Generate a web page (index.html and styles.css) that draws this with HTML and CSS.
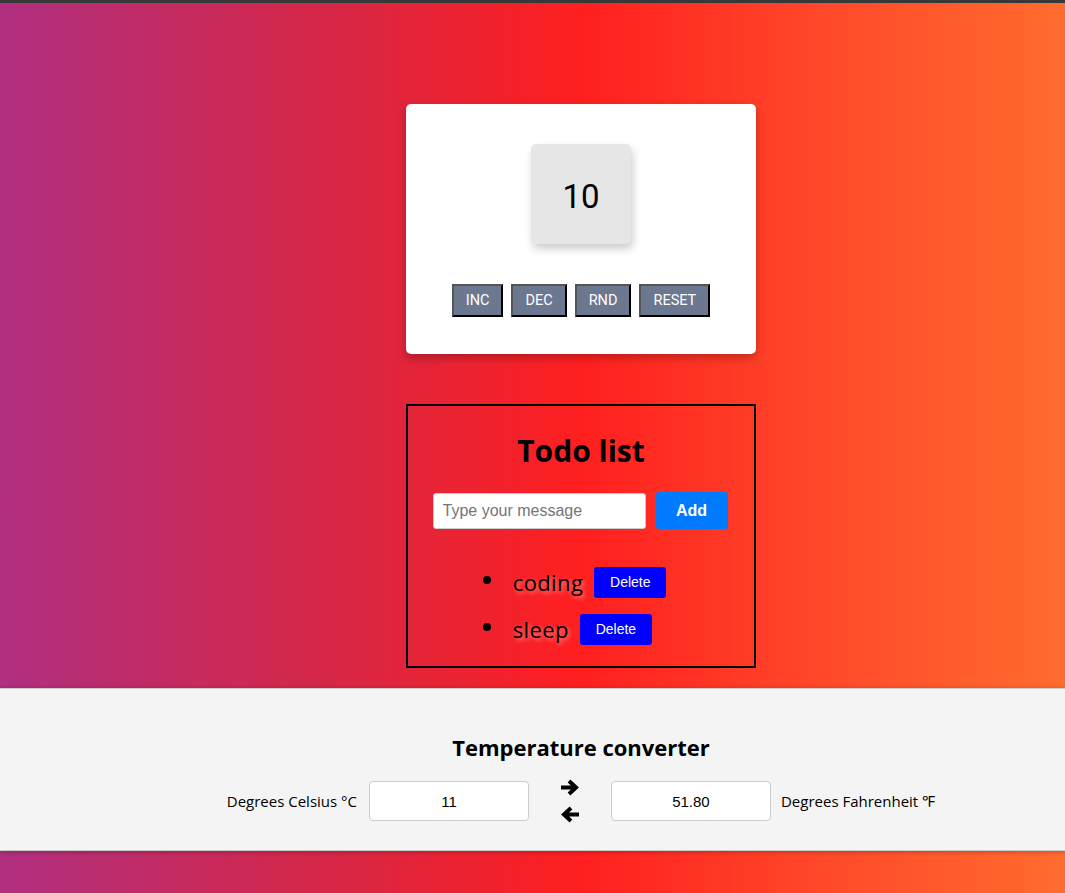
FILE: index.html
```html
<!DOCTYPE html>
<html lang="en">
<head>
<meta charset="utf-8">
<title>Widgets</title>
<link rel="stylesheet" href="styles.css">
</head>
<body>
<div class="topbar"></div>
<main class="page">
  <section class="counter-card">
    <div class="counter-value">10</div>
    <div class="counter-buttons">
      <button class="cbtn">INC</button>
      <button class="cbtn">DEC</button>
      <button class="cbtn">RND</button>
      <button class="cbtn">RESET</button>
    </div>
  </section>

  <section class="todo">
    <h1 class="todo-title">Todo list</h1>
    <div class="todo-form">
      <input class="todo-input" type="text" placeholder="Type your message">
      <button class="add-btn">Add</button>
    </div>
    <ul class="todo-list">
      <li class="todo-item"><span class="todo-text">coding</span><button class="del-btn">Delete</button></li>
      <li class="todo-item"><span class="todo-text">sleep</span><button class="del-btn">Delete</button></li>
    </ul>
  </section>
</main>

<section class="temp">
  <div class="temp-inner">
    <h2 class="temp-title">Temperature converter</h2>
    <div class="temp-row">
      <label class="temp-label temp-label-c">Degrees Celsius °C</label>
      <input class="temp-input" type="text" value="11">
      <div class="arrows">
        <svg width="20" height="17" viewBox="0 0 20 17"><path d="M1 8.5 H15 M9 2 L16 8.5 L9 15" fill="none" stroke="#000" stroke-width="4" stroke-linecap="butt" stroke-linejoin="miter"/></svg>
        <svg width="20" height="17" viewBox="0 0 20 17"><path d="M19 8.5 H5 M11 2 L4 8.5 L11 15" fill="none" stroke="#000" stroke-width="4" stroke-linecap="butt" stroke-linejoin="miter"/></svg>
      </div>
      <input class="temp-input" type="text" value="51.80">
      <label class="temp-label temp-label-f">Degrees Fahrenheit ℉</label>
    </div>
  </div>
</section>
<div class="bottom-fill"></div>
</body>
</html>
```
FILE: styles.css
```css
html, body {
  margin: 0;
  padding: 0;
}
body {
  min-height: 893px;
  background: linear-gradient(to right, #b02f80 0%, #d52748 30%, #ff1f1f 54.5%, #ff4a2a 78%, #ff6c2e 100%);
  font-family: "Open Sans", "Noto Sans", sans-serif;
  color: #000;
}
.topbar {
  height: 3px;
  background: #383838;
}
.page {
  padding-left: 97px;
  display: flex;
  flex-direction: column;
  align-items: center;
  padding-top: 101px;
}
.counter-card {
  width: 350px;
  height: 250px;
  box-sizing: border-box;
  background: #fff;
  border-radius: 5px;
  box-shadow: 0 4px 10px rgba(0, 0, 0, 0.25);
  display: flex;
  flex-direction: column;
  align-items: center;
  padding-top: 40px;
}
.counter-value {
  width: 100px;
  height: 100px;
  box-sizing: border-box;
  padding-top: 4px;
  background: #e6e6e6;
  border-radius: 5px;
  box-shadow: 2px 5px 8px rgba(0, 0, 0, 0.2);
  display: flex;
  align-items: center;
  justify-content: center;
  font-family: Roboto, "Liberation Sans", sans-serif;
  font-size: 33px;
  font-weight: 400;
  color: #000;
}
.counter-buttons {
  margin-top: 40px;
  display: flex;
  gap: 8px;
}
.cbtn {
  height: 33px;
  background: #6b7890;
  color: #fff;
  font-family: Roboto, "Liberation Sans", sans-serif;
  font-size: 14.5px;
  font-weight: 400;
  border-style: solid;
  border-width: 2px;
  border-color: #555 #000 #000 #555;
  padding: 0 12px;
}
.todo {
  margin-top: 50px;
  width: 350px;
  box-sizing: border-box;
  border: 2px solid #000;
  padding: 25px 0 16px;
  display: flex;
  flex-direction: column;
  align-items: center;
}
.todo-title {
  margin: 0;
  font-size: 30px;
  line-height: 40px;
  font-weight: 700;
}
.todo-form {
  margin-top: 21px;
  display: flex;
  gap: 10px;
  align-items: center;
  margin-right: 2px;
}
.todo-input {
  width: 213px;
  height: 36px;
  box-sizing: border-box;
  border: 1px solid #ccc;
  border-radius: 3px;
  padding: 0 9px;
  font-family: "Liberation Sans", Arial, sans-serif;
  font-size: 16px;
  background: #fff;
}
.todo-input::placeholder {
  color: #757575;
}
.add-btn {
  width: 72px;
  height: 37px;
  border: none;
  border-radius: 3px;
  background: #007bff;
  color: #fff;
  font-family: "Liberation Sans", Arial, sans-serif;
  font-size: 16px;
  font-weight: 700;
}
.todo-list {
  margin: 27px 0 0;
  padding: 0 30px 0 40px;
}
.todo-item {
  height: 47px;
  display: list-item;
  font-size: 22px;
  line-height: 47px;
  padding-left: 7px;
}
.todo-text {
  text-shadow: 2px 2px 4px #ff8a8a;
  vertical-align: middle;
  letter-spacing: 0.4px;
}
.del-btn {
  margin-left: 11px;
  width: 72px;
  height: 31px;
  border: none;
  border-radius: 3px;
  background: #0000ff;
  color: #fff;
  font-family: "Liberation Sans", Arial, sans-serif;
  font-size: 14px;
  vertical-align: middle;
}
.temp {
  margin-top: 20px;
  background: #f4f4f4;
  border-top: 1px solid #cfcaca;
  border-bottom: 1px solid #cfcaca;
  box-shadow: 0 1px 5px rgba(0, 0, 0, 0.25);
  padding: 43px 0 28px 97px;
}
.temp-inner {
  display: flex;
  flex-direction: column;
  align-items: center;
}
.temp-title {
  margin: 0 0 18px;
  font-size: 22px;
  line-height: 30px;
  font-weight: 700;
}
.temp-row {
  display: flex;
  align-items: center;
  height: 42px;
}
.temp-label {
  font-size: 15px;
}
.temp-label-c {
  margin-right: 12px;
}
.temp-label-f {
  margin-left: 10px;
}
.temp-input {
  width: 160px;
  height: 40px;
  box-sizing: border-box;
  border: 1px solid #ccc;
  border-radius: 4px;
  background: #fff;
  text-align: center;
  font-family: "Liberation Sans", Arial, sans-serif;
  font-size: 15px;
  color: #000;
}
.arrows {
  width: 82px;
  display: flex;
  flex-direction: column;
  align-items: center;
  gap: 10px;
}
.arrows svg {
  display: block;
}
.bottom-fill {
  height: 40px;
}
```
